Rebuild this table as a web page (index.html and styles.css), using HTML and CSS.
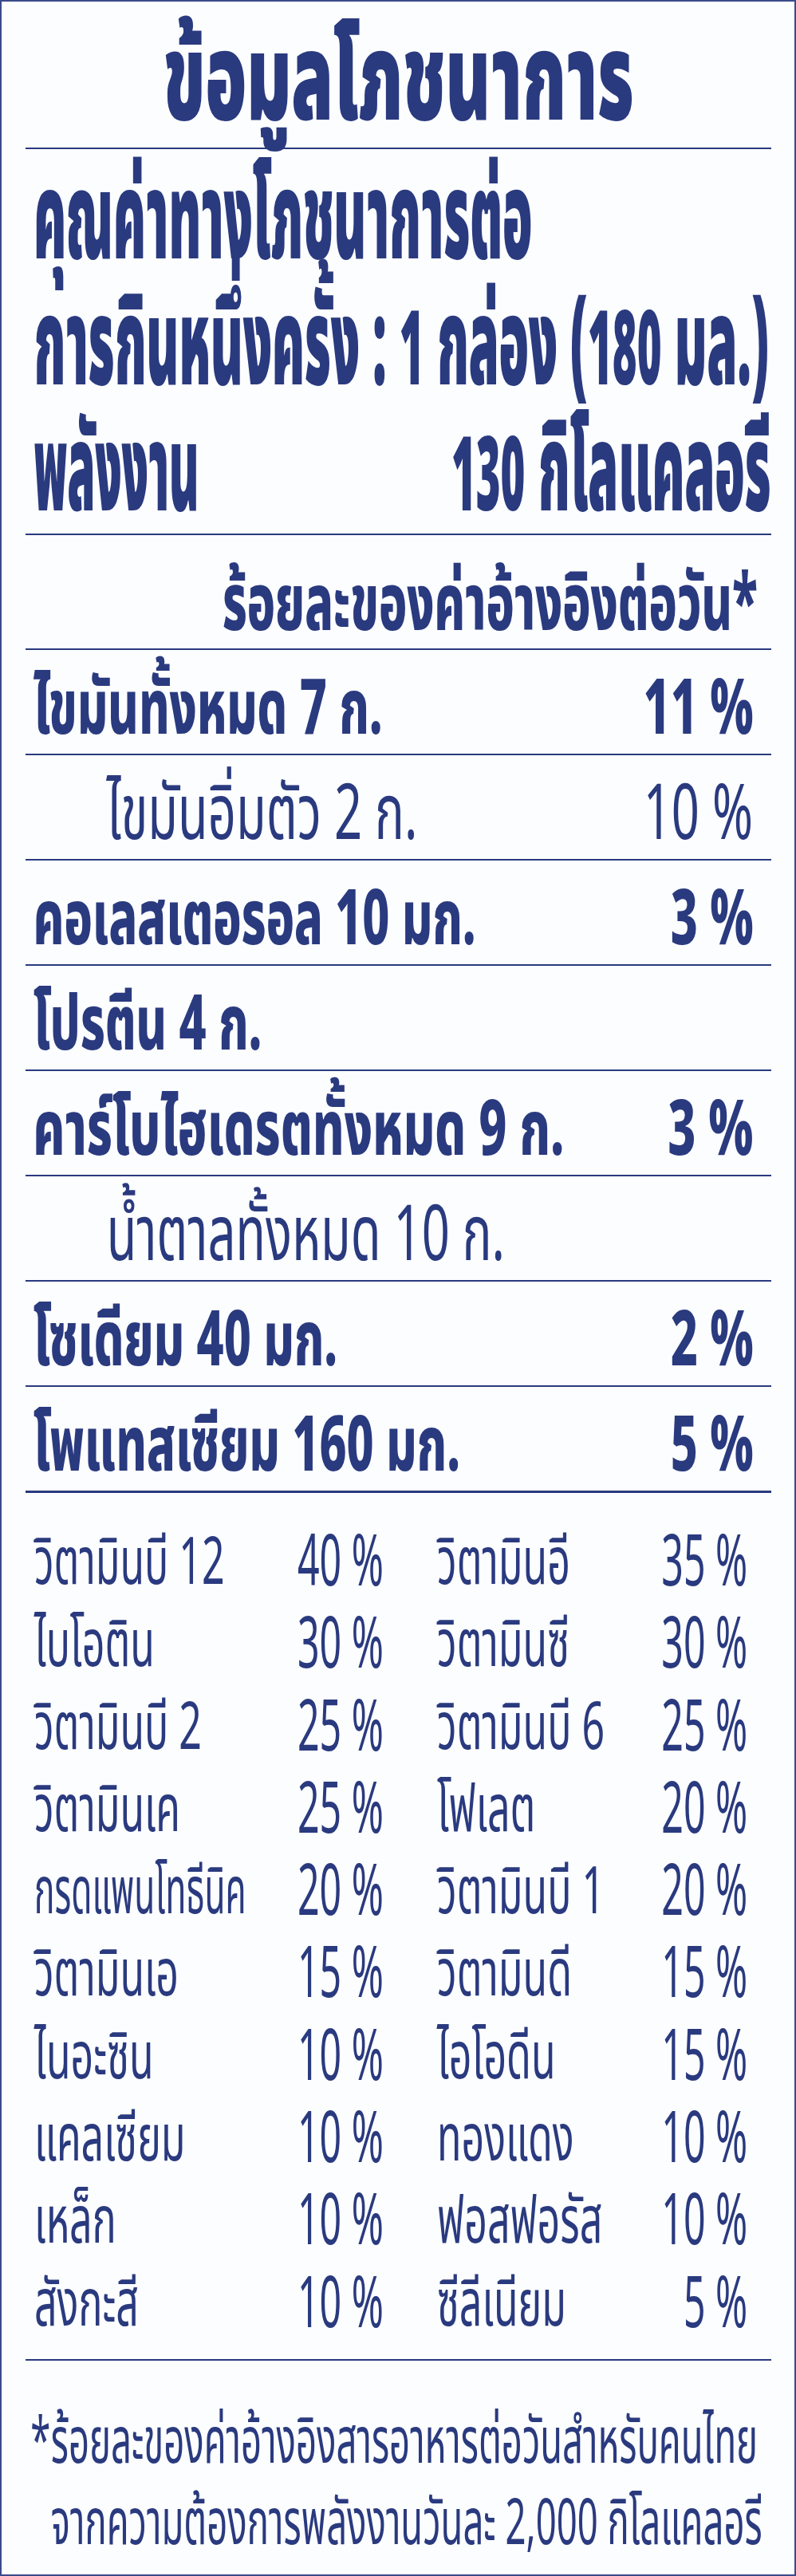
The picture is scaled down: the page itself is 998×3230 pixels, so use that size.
FILE: index.html
```html
<!DOCTYPE html>
<html lang="th">
<head>
<meta charset="utf-8">
<title>ข้อมูลโภชนาการ</title>
<link rel="stylesheet" href="styles.css">
</head>
<body>
<div class="label">
  <h1 class="title"><span class="sq sq-title">ข้อมูลโภชนาการ</span></h1>

  <div class="serving">
    <div class="sq sq-head">
      <div class="serving-line">คุณค่าทางโภชนาการต่อ</div>
      <div class="serving-line justify">การกินหนึ่งครั้ง : <span class="num">1</span> กล่อง (<span class="num">180</span> มล.)</div>
      <div class="serving-line split"><span class="narrow">พลังงาน</span><span><span class="num">130</span> กิโลแคลอรี</span></div>
    </div>
  </div>

  <div class="dv-head"><div class="sq sq-dv">ร้อยละของค่าอ้างอิงต่อวัน*</div></div>

  <div class="row"><div class="sq sq-main"><span>ไขมันทั้งหมด 7 ก.</span><span>11 %</span></div></div>
  <div class="row"><div class="sq sq-sub"><span>ไขมันอิ่มตัว 2 ก.</span><span>10 %</span></div></div>
  <div class="row"><div class="sq sq-main"><span>คอเลสเตอรอล 10 มก.</span><span>3 %</span></div></div>
  <div class="row"><div class="sq sq-main"><span>โปรตีน 4 ก.</span></div></div>
  <div class="row"><div class="sq sq-main sq-wide"><span>คาร์โบไฮเดรตทั้งหมด 9 ก.</span><span>3 %</span></div></div>
  <div class="row"><div class="sq sq-sub"><span>น้ำตาลทั้งหมด 10 ก.</span></div></div>
  <div class="row"><div class="sq sq-main"><span>โซเดียม 40 มก.</span><span>2 %</span></div></div>
  <div class="row row-last"><div class="sq sq-main"><span>โพแทสเซียม 160 มก.</span><span>5 %</span></div></div>

  <div class="vitamins">
    <div class="sq sq-vit">
      <span class="vn">วิตามินบี 12</span><span class="vp">40 %</span><span class="vn vn2">วิตามินอี</span><span class="vp">35 %</span>
      <span class="vn">ไบโอติน</span><span class="vp">30 %</span><span class="vn vn2">วิตามินซี</span><span class="vp">30 %</span>
      <span class="vn">วิตามินบี 2</span><span class="vp">25 %</span><span class="vn vn2">วิตามินบี 6</span><span class="vp">25 %</span>
      <span class="vn">วิตามินเค</span><span class="vp">25 %</span><span class="vn vn2">โฟเลต</span><span class="vp">20 %</span>
      <span class="vn tight">กรดแพนโทธีนิค</span><span class="vp">20 %</span><span class="vn vn2">วิตามินบี 1</span><span class="vp">20 %</span>
      <span class="vn">วิตามินเอ</span><span class="vp">15 %</span><span class="vn vn2">วิตามินดี</span><span class="vp">15 %</span>
      <span class="vn">ไนอะซิน</span><span class="vp">10 %</span><span class="vn vn2">ไอโอดีน</span><span class="vp">15 %</span>
      <span class="vn">แคลเซียม</span><span class="vp">10 %</span><span class="vn vn2">ทองแดง</span><span class="vp">10 %</span>
      <span class="vn">เหล็ก</span><span class="vp">10 %</span><span class="vn vn2">ฟอสฟอรัส</span><span class="vp">10 %</span>
      <span class="vn">สังกะสี</span><span class="vp">10 %</span><span class="vn vn2">ซีลีเนียม</span><span class="vp">5 %</span>
    </div>
  </div>

  <div class="footnote">
    <div class="sq sq-fn">
      <p class="fn-line"><span class="star">*</span>ร้อยละของค่าอ้างอิงสารอาหารต่อวันสำหรับคนไทย</p>
      <p class="fn-line">จากความต้องการพลังงานวันละ 2,000 กิโลแคลอรี</p>
    </div>
  </div>
</div>
</body>
</html>
```
FILE: styles.css
```css
html, body {
  margin: 0;
  padding: 0;
  background: #ffffff;
}

.label {
  box-sizing: border-box;
  width: 998px;
  height: 3230px;
  border: 2px solid #3a4a8c;
  padding: 0 29px 0 30px;
  background: #fcfdff;
  color: #2a3a7f;
  font-family: "Noto Sans Thai", "Noto Sans", sans-serif;
  overflow: hidden;
}

/* horizontally condensed text blocks (the label face is a condensed Thai sans) */
.sq {
  transform-origin: 0 0;
  white-space: nowrap;
}

/* ---------- title ---------- */
.title {
  margin: 0;
  height: 163px;
  padding-top: 20px;
  border-bottom: 2px solid #2a3a7f;
  font-size: 152px;
  font-weight: 900;
  line-height: 163px;
}

.sq-title {
  display: block;
  width: 1670px;
  text-align: center;
  transform: scaleX(0.56);
}

/* ---------- serving block ---------- */
.serving {
  height: 466px;
  padding-top: 16px;
  border-bottom: 2px solid #2a3a7f;
  font-size: 152px;
  font-weight: 900;
}

.sq-head {
  box-sizing: border-box;
  width: 2309px;
  padding: 0 2px 0 25px;
  transform: scaleX(0.405);
}

.serving-line {
  height: 158px;
  line-height: 150px;
}

.serving-line:last-child {
  height: 150px;
}

.serving-line.justify {
  text-align: justify;
  text-align-last: justify;
  margin-right: 16px;
}

.serving-line.split {
  display: flex;
  justify-content: space-between;
}

.narrow {
  transform: scaleX(0.92);
  transform-origin: 0 50%;
}

.num {
  font-size: 130px;
}

/* ---------- %DV heading ---------- */
.dv-head {
  box-sizing: border-box;
  height: 144px;
  padding-top: 35px;
  border-bottom: 2px solid #2a3a7f;
  font-size: 100px;
  font-weight: 800;
  line-height: 107px;
}

.sq-dv {
  box-sizing: border-box;
  width: 1585px;
  padding-right: 29px;
  text-align: right;
  transform: scaleX(0.59);
}

/* ---------- nutrient rows ---------- */
.row {
  box-sizing: border-box;
  height: 132px;
  padding-top: 21px;
  border-bottom: 2px solid #2a3a7f;
  font-size: 96px;
  line-height: 109px;
}

.row-last {
  height: 133px;
  border-bottom-width: 3px;
}

.sq-main,
.sq-sub {
  box-sizing: border-box;
  display: flex;
  justify-content: space-between;
}

.sq-main {
  width: 1520px;
  padding: 0 36px 0 16px;
  font-weight: 800;
  transform: scaleX(0.615);
}

.sq-main.sq-wide {
  width: 1472px;
  padding: 0 35px 0 15px;
  transform: scaleX(0.635);
}

.sq-sub {
  width: 1461px;
  padding: 0 36px 0 159px;
  font-weight: 400;
  transform: scaleX(0.64);
}

/* ---------- vitamins & minerals ---------- */
.vitamins {
  box-sizing: border-box;
  height: 1088px;
  padding-top: 38px;
  border-bottom: 2px solid #2a3a7f;
  font-size: 82px;
  font-weight: 400;
}

.sq-vit {
  box-sizing: border-box;
  width: 1533px;
  padding-left: 18px;
  display: grid;
  grid-template-columns: 474px 244px 510px 238px;
  grid-auto-rows: 103.3px;
  line-height: 103.3px;
  transform: scaleX(0.61);
}

.vn2 {
  padding-left: 110px;
}

.tight {
  transform: scaleX(0.85);
  transform-origin: 0 50%;
}

.vp {
  text-align: right;
  font-size: 90px;
  transform: scaleX(0.88);
  transform-origin: 100% 50%;
}

/* ---------- footnote ---------- */
.footnote {
  padding-top: 53px;
  font-size: 80px;
  font-weight: 400;
  line-height: 102px;
}

.sq-fn {
  box-sizing: border-box;
  width: 1646px;
  padding: 0 53px 0 56px;
  transform: scaleX(0.568);
}

.fn-line {
  margin: 0;
  text-align: justify;
  text-align-last: justify;
}

.star {
  display: inline-block;
  width: 45px;
  margin-left: -45px;
}
```
